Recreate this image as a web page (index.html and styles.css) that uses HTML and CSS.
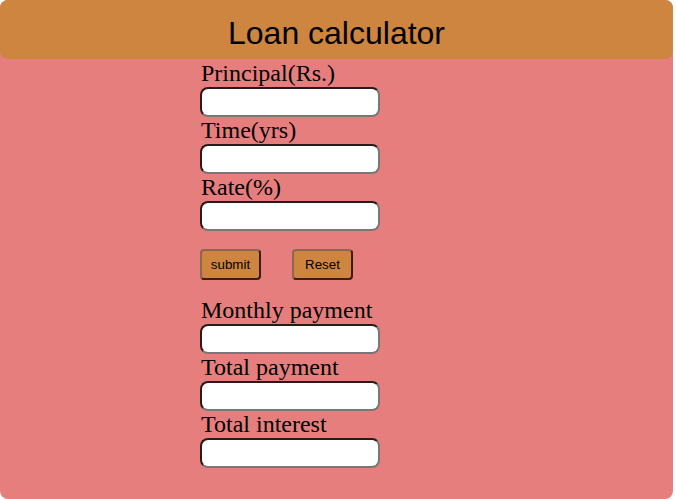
FILE: index.html
```html
<!DOCTYPE html>
<html>
<head>
<meta charset="utf-8">
<title>Loan calculator</title>
<link rel="stylesheet" href="styles.css">
</head>
<body>
<div class="app">
  <div class="header">Loan calculator</div>
  <form class="form">
    <label class="label">Principal(Rs.)</label>
    <input class="field" type="text">
    <label class="label">Time(yrs)</label>
    <input class="field" type="text">
    <label class="label">Rate(%)</label>
    <input class="field" type="text">
    <div class="buttons">
      <button type="button" class="btn">submit</button>
      <button type="button" class="btn">Reset</button>
    </div>
    <label class="label">Monthly payment</label>
    <input class="field" type="text">
    <label class="label">Total payment</label>
    <input class="field" type="text">
    <label class="label">Total interest</label>
    <input class="field" type="text">
  </form>
</div>
</body>
</html>
```
FILE: styles.css
```css
html, body {
  margin: 0;
  padding: 0;
  background: #ffffff;
}
.app {
  width: 673px;
  height: 499px;
  background: #e67e7e;
  border-radius: 8px;
  box-sizing: border-box;
}
.header {
  height: 59px;
  background: #cd853f;
  border-radius: 8px;
  font-family: "Liberation Sans", Arial, sans-serif;
  font-size: 32px;
  line-height: 66px;
  text-align: center;
  color: #000;
}
.form {
  display: flex;
  flex-direction: column;
  align-items: flex-start;
  padding-left: 200px;
  padding-top: 1px;
}
.label {
  font-family: "Liberation Serif", "Times New Roman", serif;
  font-size: 24px;
  line-height: 27px;
  height: 27px;
  padding-left: 1px;
  color: #000;
}
.field {
  box-sizing: border-box;
  width: 180px;
  height: 30px;
  margin: 0;
  border-radius: 8px;
  border-style: solid;
  border-width: 2px;
  border-color: #2b1a1a #777 #777 #2b1a1a;
  background: #fff;
}
.buttons {
  display: flex;
  gap: 31px;
  margin: 18px 0 17px 0;
}
.btn {
  box-sizing: border-box;
  width: 61px;
  height: 31px;
  margin: 0;
  padding: 0;
  font-family: "Liberation Sans", Arial, sans-serif;
  font-size: 13.33px;
  color: #000;
  background: #cd853f;
  border-radius: 4px;
  border-style: solid;
  border-width: 2px;
  border-color: #8a6655 #3a1c12 #3a1c12 #8a6655;
}
```
